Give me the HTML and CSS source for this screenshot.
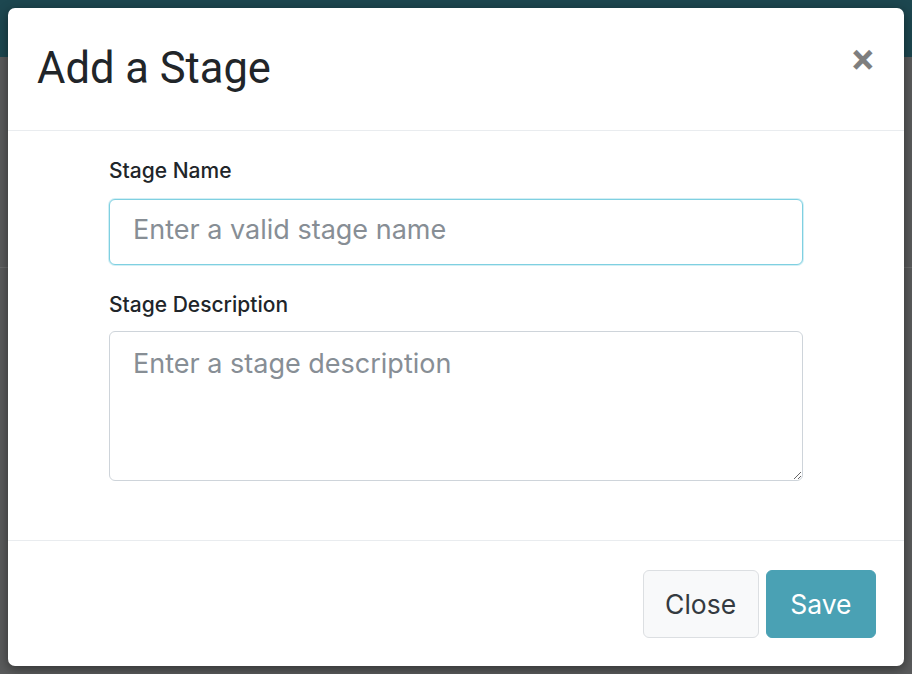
FILE: index.html
```html
<!DOCTYPE html>
<html lang="en">
<head>
<meta charset="utf-8">
<title>Add a Stage</title>
<link rel="stylesheet" href="styles.css">
</head>
<body>
<div class="app">
  <div class="topbar"></div>
  <div class="backdrop">
    <div class="backdrop-row"></div>
  </div>
</div>
<div class="modal">
  <div class="modal-header">
    <h1 class="modal-title">Add a Stage</h1>
    <button class="close" type="button" aria-label="Close">&times;</button>
  </div>
  <div class="modal-body">
    <form class="stage-form">
      <label class="field-label" for="stage-name">Stage Name</label>
      <input class="field-input" id="stage-name" type="text" placeholder="Enter a valid stage name">
      <label class="field-label label-desc" for="stage-desc">Stage Description</label>
      <textarea class="field-input field-textarea" id="stage-desc" placeholder="Enter a stage description"></textarea>
    </form>
  </div>
  <div class="modal-footer">
    <button class="btn btn-light" type="button">Close</button>
    <button class="btn btn-info" type="button">Save</button>
  </div>
</div>
</body>
</html>
```

FILE: styles.css
```css
* { box-sizing: border-box; }
html, body { margin: 0; padding: 0; }
body {
  width: 912px;
  height: 674px;
  overflow: hidden;
  font-family: Inter, Roboto, "Liberation Sans", sans-serif;
  background: #5a5b5c;
  position: relative;
}
.app { height: 674px; display: flex; flex-direction: column; }
.topbar { height: 57px; background: #1d4750; }
.backdrop { flex: 1; background: #5a5b5c; }
.backdrop-row { height: 211px; border-bottom: 1px solid #6a6b6c; }

.modal {
  position: absolute;
  left: 8px;
  top: 8px;
  width: 896px;
  height: 658px;
  background: #fff;
  border-radius: 7px;
  box-shadow: 0 3px 12px rgba(0,0,0,0.45);
  display: flex;
  flex-direction: column;
}
.modal-header {
  display: flex;
  justify-content: space-between;
  align-items: flex-start;
  padding: 29px 29px;
  border-bottom: 1px solid #e9ecef;
}
.modal-title {
  margin: 0;
  font-family: Roboto, "Liberation Sans", sans-serif;
  font-size: 43.5px;
  line-height: 64px;
  font-weight: 400;
  color: #212529;
}
.close {
  border: 0;
  background: transparent;
  padding: 0;
  margin: 3px 1px 0 0;
  font-family: Roboto, "Liberation Sans", sans-serif;
  font-size: 42px;
  font-weight: 700;
  line-height: 40px;
  color: #000;
  opacity: 0.5;
  text-shadow: 0 1px 0 #fff;
  cursor: pointer;
}
.modal-body {
  flex: 1;
  padding: 25px 0 0;
  display: flex;
  justify-content: center;
}
.stage-form {
  width: 694px;
  display: flex;
  flex-direction: column;
}
.field-label {
  font-size: 21px;
  line-height: 30px;
  font-weight: 500;
  color: #212529;
  margin-bottom: 13px;
}
.label-desc { margin-top: 25px; margin-bottom: 11px; }
.field-input {
  display: block;
  width: 100%;
  height: 66px;
  padding: 8px 23px 14px;
  font-family: Inter, Roboto, "Liberation Sans", sans-serif;
  font-size: 27px;
  line-height: 42px;
  color: #495057;
  background: #fff;
  border: 1px solid #7fd0e1;
  box-shadow: 0 0 0 1px rgba(127,208,225,0.35);
  border-radius: 6px;
  outline: none;
}
.field-input::placeholder { color: #878e95; opacity: 1; }
.field-textarea {
  height: 150px;
  padding-top: 11px;
  border-color: #ced4da;
  box-shadow: none;
  resize: vertical;
}
.modal-footer {
  display: flex;
  justify-content: flex-end;
  gap: 7px;
  padding: 29px 28px 28px;
  border-top: 1px solid #e9ecef;
}
.btn {
  height: 68px;
  padding: 0 21.5px;
  font-family: Inter, Roboto, "Liberation Sans", sans-serif;
  font-size: 26.5px;
  font-weight: 400;
  border-radius: 6px;
  border: 1px solid transparent;
  cursor: pointer;
}
.btn-light {
  background: #f8f9fa;
  border-color: #dcdfe2;
  color: #343a40;
}
.btn-info {
  background: #4aa1b4;
  border-color: #4aa1b4;
  color: #fff;
  padding: 0 23.5px;
}
```
